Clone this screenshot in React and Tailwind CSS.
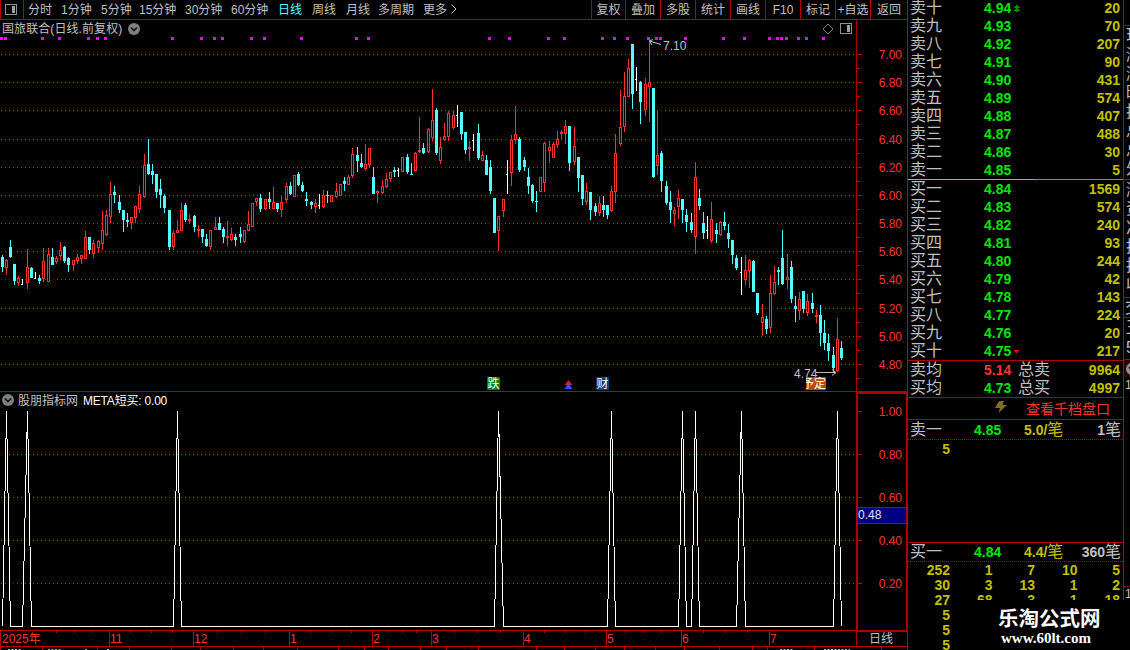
import { Fragment } from "react";

const PERIODS = [
  { label: "分时", width: "w-[33px]" },
  { label: "1分钟", width: "w-[40px]" },
  { label: "5分钟", width: "w-[38px]" },
  { label: "15分钟", width: "w-[46px]" },
  { label: "30分钟", width: "w-[46px]" },
  { label: "60分钟", width: "w-[47px]" },
  { label: "日线", width: "w-[34px]", active: true },
  { label: "周线", width: "w-[34px]" },
  { label: "月线", width: "w-[32px]" },
  { label: "多周期", width: "w-[45px]" },
  { label: "更多", width: "w-[27px]" },
];

const TOOLS = ["复权", "叠加", "多股", "统计", "画线", "F10", "标记", "+自选", "返回"];

// x, high, low, body top, body bottom, direction (u = up, d = down)
// flat days: x, high, low, open tick, 0, "w"
const CANDLES = [
  [2, 255, 272, 257, 267, "d"], [6, 259, 275, 260, 268, "u"], [10, 240, 258, 247, 257, "d"],
  [14, 264, 285, 264, 281, "d"], [18, 276, 286, 278, 283, "u"], [22, 279, 285, 284, 0, "w"],
  [27, 249, 289, 267, 283, "u"], [31, 267, 278, 268, 278, "d"], [35, 272, 279, 278, 0, "w"],
  [39, 275, 284, 278, 281, "d"], [43, 248, 282, 261, 279, "u"], [48, 248, 282, 254, 282, "u"],
  [52, 248, 265, 257, 265, "d"], [56, 256, 264, 258, 262, "u"], [60, 242, 260, 250, 256, "u"],
  [64, 246, 263, 247, 261, "d"], [68, 257, 272, 258, 265, "d"], [73, 260, 271, 260, 265, "u"],
  [77, 254, 264, 257, 261, "u"], [81, 255, 264, 255, 259, "u"], [85, 231, 259, 237, 259, "u"],
  [89, 237, 254, 237, 250, "d"], [93, 240, 258, 243, 254, "u"], [98, 240, 253, 241, 248, "u"],
  [102, 211, 250, 230, 244, "u"], [106, 210, 236, 215, 235, "u"], [110, 182, 223, 194, 217, "u"],
  [114, 186, 203, 192, 195, "d"], [119, 195, 213, 202, 210, "d"], [123, 210, 232, 210, 220, "d"],
  [127, 213, 227, 220, 222, "d"], [131, 217, 229, 217, 223, "u"], [135, 206, 223, 206, 218, "u"],
  [139, 186, 213, 194, 209, "u"], [144, 154, 198, 165, 197, "u"], [148, 139, 175, 164, 174, "d"],
  [152, 164, 184, 171, 175, "d"], [156, 174, 198, 174, 192, "d"], [160, 179, 208, 189, 195, "d"],
  [164, 194, 213, 196, 208, "d"], [169, 210, 250, 210, 247, "d"], [173, 230, 250, 233, 247, "u"],
  [177, 220, 233, 230, 233, "u"], [181, 203, 231, 210, 231, "u"], [185, 203, 222, 205, 220, "d"],
  [189, 214, 224, 219, 221, "u"], [194, 215, 232, 216, 227, "d"], [198, 225, 237, 229, 231, "u"],
  [202, 229, 243, 229, 237, "d"], [206, 234, 247, 239, 246, "d"], [210, 230, 250, 230, 247, "u"],
  [215, 217, 230, 227, 230, "u"], [219, 217, 230, 223, 230, "d"], [223, 227, 243, 229, 237, "d"],
  [227, 221, 246, 236, 238, "u"], [231, 228, 241, 234, 240, "u"], [235, 234, 246, 237, 240, "d"],
  [240, 227, 243, 234, 237, "d"], [244, 230, 243, 230, 242, "u"], [248, 211, 231, 224, 231, "u"],
  [252, 203, 227, 203, 227, "u"], [256, 198, 206, 198, 202, "u"], [260, 194, 212, 198, 209, "d"],
  [265, 199, 210, 199, 209, "u"], [269, 192, 209, 199, 202, "d"], [273, 187, 209, 202, 209, "u"],
  [277, 203, 212, 203, 209, "d"], [281, 196, 217, 202, 210, "u"], [286, 183, 203, 186, 200, "u"],
  [290, 182, 195, 186, 194, "d"], [294, 175, 197, 175, 197, "u"], [298, 172, 186, 174, 185, "d"],
  [302, 182, 192, 185, 191, "d"], [306, 192, 206, 199, 201, "d"], [311, 201, 209, 202, 205, "d"],
  [315, 199, 213, 203, 207, "u"], [319, 194, 209, 205, 0, "w"], [323, 190, 208, 195, 207, "u"],
  [327, 191, 203, 195, 196, "d"], [331, 195, 202, 195, 202, "u"], [336, 183, 198, 191, 197, "u"],
  [340, 184, 196, 184, 196, "u"], [344, 177, 191, 181, 184, "d"], [348, 175, 185, 177, 185, "u"],
  [352, 148, 178, 154, 176, "u"], [357, 147, 172, 155, 161, "d"], [361, 154, 168, 163, 167, "d"],
  [365, 144, 171, 164, 169, "u"], [369, 148, 168, 148, 165, "u"], [373, 167, 194, 177, 194, "d"],
  [377, 190, 203, 191, 193, "u"], [382, 180, 194, 186, 193, "u"], [386, 173, 188, 179, 187, "u"],
  [390, 172, 182, 172, 179, "u"], [394, 167, 177, 170, 172, "d"], [398, 168, 177, 170, 0, "w"],
  [402, 157, 172, 157, 172, "u"], [407, 154, 174, 157, 172, "d"], [411, 163, 175, 174, 175, "d"],
  [415, 152, 171, 153, 171, "u"], [419, 117, 153, 150, 152, "u"], [423, 143, 154, 148, 153, "d"],
  [428, 128, 153, 129, 152, "u"], [432, 89, 141, 120, 138, "u"], [436, 108, 155, 110, 153, "d"],
  [440, 137, 164, 147, 161, "u"], [444, 123, 141, 136, 140, "u"], [448, 111, 141, 113, 137, "u"],
  [453, 111, 129, 115, 128, "u"], [457, 105, 127, 115, 0, "w"], [461, 112, 140, 112, 134, "d"],
  [465, 132, 154, 132, 150, "d"], [469, 141, 161, 147, 149, "u"], [473, 134, 151, 140, 0, "w"],
  [478, 124, 160, 133, 158, "d"], [482, 151, 161, 155, 161, "u"], [486, 155, 175, 160, 175, "d"],
  [490, 160, 194, 167, 191, "d"], [494, 198, 233, 198, 233, "d"], [498, 216, 251, 216, 231, "u"],
  [503, 199, 217, 199, 211, "u"], [507, 160, 194, 174, 0, "w"], [511, 135, 186, 140, 173, "u"],
  [515, 106, 144, 134, 140, "u"], [519, 137, 172, 139, 170, "d"], [524, 157, 171, 160, 167, "d"],
  [528, 168, 194, 177, 186, "d"], [532, 184, 203, 185, 201, "d"], [536, 191, 212, 201, 202, "d"],
  [540, 177, 192, 177, 192, "u"], [544, 142, 192, 143, 183, "u"], [549, 141, 163, 147, 151, "u"],
  [553, 142, 158, 144, 158, "u"], [557, 131, 148, 139, 145, "u"], [561, 130, 140, 132, 134, "u"],
  [565, 120, 144, 126, 134, "u"], [569, 126, 171, 126, 163, "d"], [574, 127, 165, 146, 162, "u"],
  [578, 157, 192, 157, 178, "d"], [582, 175, 205, 175, 199, "d"], [586, 183, 205, 191, 202, "u"],
  [590, 192, 220, 192, 210, "d"], [595, 203, 216, 206, 212, "d"], [599, 196, 216, 203, 213, "u"],
  [603, 196, 217, 205, 210, "d"], [607, 205, 219, 205, 215, "d"], [611, 186, 212, 191, 211, "u"],
  [615, 134, 203, 153, 192, "u"], [620, 90, 146, 127, 144, "u"], [624, 72, 132, 96, 127, "u"],
  [628, 59, 97, 68, 97, "u"], [632, 44, 109, 44, 94, "d"], [636, 67, 91, 79, 0, "w"],
  [640, 81, 124, 82, 102, "d"], [645, 78, 116, 84, 110, "u"], [649, 40, 122, 82, 87, "u"],
  [653, 88, 178, 88, 177, "d"], [657, 111, 175, 155, 166, "u"], [661, 151, 192, 153, 181, "d"],
  [666, 181, 205, 186, 203, "d"], [670, 191, 223, 202, 210, "d"], [674, 207, 226, 210, 214, "u"],
  [678, 190, 219, 198, 207, "u"], [682, 199, 223, 199, 210, "d"], [686, 209, 232, 215, 222, "d"],
  [691, 213, 233, 222, 230, "d"], [695, 162, 254, 177, 237, "u"], [699, 189, 210, 198, 206, "d"],
  [703, 212, 239, 223, 233, "d"], [707, 216, 239, 230, 0, "w"], [711, 202, 243, 219, 241, "u"],
  [716, 223, 243, 230, 234, "d"], [720, 221, 236, 222, 235, "u"], [724, 212, 230, 222, 226, "d"],
  [728, 224, 248, 233, 239, "d"], [732, 240, 264, 240, 255, "d"], [736, 255, 270, 258, 268, "d"],
  [741, 257, 295, 272, 0, "w"], [745, 255, 285, 270, 280, "u"], [749, 259, 288, 260, 271, "u"],
  [753, 260, 292, 261, 292, "d"], [757, 293, 315, 293, 313, "d"], [762, 304, 336, 317, 323, "u"],
  [766, 316, 334, 319, 329, "d"], [770, 275, 333, 293, 328, "u"], [774, 266, 295, 282, 294, "u"],
  [778, 267, 285, 270, 272, "d"], [782, 230, 285, 258, 284, "d"], [787, 254, 289, 277, 280, "u"],
  [791, 261, 303, 267, 299, "d"], [795, 296, 322, 306, 309, "d"], [799, 292, 320, 299, 311, "u"],
  [803, 291, 313, 291, 309, "d"], [807, 294, 316, 301, 313, "u"], [812, 293, 313, 303, 309, "d"],
  [816, 310, 323, 315, 317, "u"], [820, 305, 346, 315, 333, "d"], [824, 320, 350, 333, 343, "d"],
  [828, 334, 361, 343, 351, "d"], [833, 347, 372, 355, 368, "d"], [837, 318, 372, 339, 371, "u"],
  [841, 341, 360, 348, 358, "d"],
];

const PRICE_LEVELS = [
  [54, "7.00"], [82, "6.80"], [110, "6.60"], [139, "6.40"], [167, "6.20"], [195, "6.00"],
  [223, "5.80"], [251, "5.60"], [279, "5.40"], [308, "5.20"], [336, "5.00"], [364, "4.80"],
];

const SIGNAL_LEVELS = [
  [411, "1.00"], [454, "0.80"], [497, "0.60"], [540, "0.40"], [583, "0.20"],
];

const EVENT_DOTS = [
  1, 5, 42, 59, 88, 97, 105, 172, 201, 214, 222, 251, 264, 301, 356, 368, 489, 509, 548, 564, 602,
  614, 627, 648, 656, 660, 685, 723, 744, 769, 777, 781, 786, 798, 806, 823,
];

// start, peak and end of every signal
const SPIKES = [
  [2, 6, 10], [22, 27, 31], [173, 177, 181], [494, 498, 503], [607, 611, 615],
  [678, 682, 686], [691, 695, 699], [736, 741, 745], [833, 837, 841],
];

const MONTHS = [
  [109, "11"], [193, "12"], [289, "1"], [372, "2"], [431, "3"], [523, "4"], [606, "5"], [681, "6"], [769, "7"],
];

const WEEK_TICKS = [
  56, 74, 91, 130, 151, 172, 217, 241, 265, 310, 331, 351, 387, 402, 416, 454, 477, 500, 544, 565,
  585, 625, 644, 661, 703, 725, 747,
];

const TAB_TICKS = [
  0, 42, 97, 129, 171, 200, 233, 263, 297, 338, 364, 388, 420, 446, 478, 536, 564, 595, 624, 655,
  684, 719, 752, 767, 814, 881,
];

const SELLS = [
  ["卖十", "4.94", "20"], ["卖九", "4.93", "70"], ["卖八", "4.92", "207"], ["卖七", "4.91", "90"],
  ["卖六", "4.90", "431"], ["卖五", "4.89", "574"], ["卖四", "4.88", "407"], ["卖三", "4.87", "488"],
  ["卖二", "4.86", "30"], ["卖一", "4.85", "5"],
];

const BUYS = [
  ["买一", "4.84", "1569"], ["买二", "4.83", "574"], ["买三", "4.82", "240"], ["买四", "4.81", "93"],
  ["买五", "4.80", "244"], ["买六", "4.79", "42"], ["买七", "4.78", "143"], ["买八", "4.77", "224"],
  ["买九", "4.76", "20"], ["买十", "4.75", "217"],
];

const BUY_QUEUE = [
  ["252", "1", "7", "10", "5"],
  ["30", "3", "13", "1", "2"],
  ["27", "68", "3", "1", "18"],
  ["5", "", "", "", ""],
  ["5", "", "", "", ""],
  ["5", "", "", "", ""],
];

function SplitIcon() {
  return (
    <svg width="13" height="12" viewBox="0 0 13 12" shapeRendering="crispEdges">
      <rect x="0.5" y="0.5" width="11" height="10" rx="1" fill="none" stroke="#909090" />
      <rect x="7" y="2" width="3" height="7" fill="#a0a0a0" />
    </svg>
  );
}

function CollapseIcon() {
  return (
    <svg width="12" height="12" viewBox="0 0 12 12">
      <circle cx="6" cy="6" r="6" fill="#808080" />
      <path d="M3 4.5 6 7.5 9 4.5" fill="none" stroke="#101010" strokeWidth="1.6" />
    </svg>
  );
}

function Toolbar() {
  return (
    <div className="flex h-5 justify-between border-b border-[#b00000] leading-[21px]">
      <div className="flex whitespace-nowrap">
        <div className="mr-1 flex w-6 items-center border-x border-[#b00000] pl-1">
          <SplitIcon />
        </div>
        {PERIODS.map((p) => (
          <span key={p.label} className={`${p.width} ${p.active ? "text-[#54ffff]" : ""}`}>
            {p.label}
          </span>
        ))}
        <svg width="8" height="18" viewBox="0 0 8 18">
          <path d="M1.5 4.5 6 9 1.5 13.5" fill="none" stroke="#c0c0c0" />
        </svg>
      </div>
      <div className="flex">
        {TOOLS.map((t, i) => (
          <span
            key={t}
            className={`flex justify-center whitespace-nowrap border-l border-[#b00000] ${
              i === 0 ? "w-[34px]" : i === TOOLS.length - 1 ? "w-[37px]" : "w-[35px]"
            }`}
          >
            {t}
          </span>
        ))}
      </div>
    </div>
  );
}

function Candle({ data }) {
  const [x, high, low, top, bottom, dir] = data;
  if (dir === "w") {
    return (
      <g fill="#ffffff">
        <rect x={x} y={high} width="1" height={low - high} />
        <rect x={x - 1} y={top} width="1" height="1" />
      </g>
    );
  }
  const h = bottom - top;
  return (
    <g fill={dir === "u" ? "#ff3232" : "#54ffff"}>
      <rect x={x} y={high} width="1" height={low - high} />
      <rect x={x - 1} y={top} width="3" height={h} />
      {dir === "u" && h > 2 && <rect x={x} y={top + 1} width="1" height={h - 2} fill="#000000" />}
    </g>
  );
}

function GridLine({ y }) {
  return <line x1="1" x2="856" y1={y + 0.5} y2={y + 0.5} stroke="#b00000" strokeDasharray="1 3" />;
}

function Flag({ x, width, color, text }) {
  return (
    <g>
      <rect x={x} y="377" width={width} height="13" rx="1" fill={color} />
      <text x={x + width / 2} y="388" fill="#ffffff" textAnchor="middle" fontSize="12">
        {text}
      </text>
    </g>
  );
}

function PriceChart() {
  return (
    <section className="h-[372px] border-b border-[#b00000]">
      <header className="flex h-[17px] items-center justify-between pl-[2px] pr-[54px] pt-px">
        <div className="flex items-center gap-[6px] leading-[18px]">
          <span className="tracking-[0.08px]">国旅联合(日线.前复权)</span>
          <CollapseIcon />
        </div>
        <div className="flex items-center gap-[6px]">
          <svg width="12" height="12" viewBox="0 0 12 12">
            <path d="M6 1 11 6 6 11 1 6Z" fill="none" stroke="#808080" />
          </svg>
          <SplitIcon />
        </div>
      </header>
      <svg width="907" height="354" viewBox="0 37 907 354" className="block overflow-visible" fontSize="12">
        <g shapeRendering="crispEdges">
          {PRICE_LEVELS.map(([y]) => (
            <Fragment key={y}>
              <GridLine y={y} />
              <rect x="857" y={y} width="5" height="1" fill="#b00000" />
              <rect x="857" y={y + 14} width="3" height="1" fill="#b00000" />
            </Fragment>
          ))}
          <rect x="856" y="20" width="1" height="371" fill="#b00000" />
          {CANDLES.map((c) => (
            <Candle key={c[0]} data={c} />
          ))}
          {EVENT_DOTS.map((x) => (
            <rect key={x} x={x - 1} y="37" width="3" height="3" fill="#ff00ff" />
          ))}
        </g>
        {PRICE_LEVELS.map(([y, label]) => (
          <text key={y} x="902" y={y + 5} textAnchor="end" fill="#ff3232">
            {label}
          </text>
        ))}
        <g fill="none" stroke="#c0c0c0">
          <path d="M661 44.5 649.5 41M653 39.5 649.5 41 652 45" />
          <path d="M816 372.5H836M832 369.5 836 372.5 832 375.5" />
        </g>
        <g fill="#c0c0c0">
          <text x="663" y="50">7.10</text>
          <text x="794" y="378">4.74</text>
        </g>
        <Flag x={487} width={13} color="#008000" text="跌" />
        <Flag x={596} width={13} color="#003f7f" text="财" />
        <g>
          <rect x="806" y="377" width="20" height="13" rx="1" fill="#c04800" />
          <text x="802" y="388" fill="#ffffff" clipPath="inset(0 0 0 4px)">予定</text>
        </g>
        <path d="M568.5 380 572.5 385H564.5Z" fill="#d02020" />
        <path d="M568.5 383 572.5 389H564.5Z" fill="#3050ff" />
      </svg>
    </section>
  );
}

function SignalChart() {
  const points = SPIKES.map(([a, b, c]) => `${a + 0.5},626.5 ${b + 0.5},411 ${c + 0.5},626.5`).join(" ");
  return (
    <section className="h-[238px]">
      <header className="flex h-4 items-center pl-[2px] leading-[18px]">
        <CollapseIcon />
        <span className="ml-1 pt-px">股朋指标网</span>
        <span className="ml-[5px] pt-px tracking-[-0.2px] text-white">META短买: 0.00</span>
      </header>
      <svg width="907" height="222" viewBox="0 408 907 222" className="block overflow-visible" fontSize="12">
        <g shapeRendering="crispEdges">
          {SIGNAL_LEVELS.map(([y]) => (
            <Fragment key={y}>
              {y > 411 && <GridLine y={y} />}
              <rect x="858" y={y} width="4" height="1" fill="#b00000" />
            </Fragment>
          ))}
          <polyline points={points} fill="none" stroke="#ffffff" />
          <rect x="857" y="393" width="50" height="238" fill="none" stroke="#b00000" strokeWidth="2" />
          <rect x="857.5" y="507.5" width="49" height="16" fill="#000080" stroke="#b00000" />
        </g>
        {SIGNAL_LEVELS.map(([y, label]) => (
          <text key={y} x="902" y={y + 5} textAnchor="end" fill="#ff3232">
            {label}
          </text>
        ))}
        <text x="858" y="519" fill="#e0e0e0">0.48</text>
      </svg>
    </section>
  );
}

function DateAxis() {
  return (
    <svg width="907" height="20" viewBox="0 630 907 20" className="block" fontSize="12">
      <g fill="#b00000" shapeRendering="crispEdges">
        <rect x="0" y="630" width="907" height="1" />
        <rect x="856" y="630" width="51" height="2" />
        <rect x="0" y="646" width="907" height="1" />
        <rect x="0" y="630" width="1" height="17" />
        <rect x="856" y="630" width="1" height="17" />
        {MONTHS.map(([x]) => (
          <rect key={x} x={x} y="630" width="1" height="17" />
        ))}
        {WEEK_TICKS.map((x) => (
          <rect key={x} x={x} y="631" width="1" height="2" />
        ))}
        {TAB_TICKS.map((x) => (
          <rect key={x} x={x} y="647" width="1" height="3" />
        ))}
      </g>
      <g fill="#ff3232">
        <text x="2" y="643">2025年</text>
        {MONTHS.map(([x, label]) => (
          <text key={x} x={x + 1} y="643">
            {label}
          </text>
        ))}
      </g>
      <text x="869" y="643" fill="#c0c0c0">日线</text>
      {/* tops of the tab captions below the window edge */}
      <g strokeDasharray="2 1.5" strokeWidth="1">
        <path d="M8 649.5H22M107 649.5H109M780 649.5H794M824 649.5H850" stroke="#c0c0c0" />
        <path d="M48 649.5H62M85 649.5H88" stroke="#c0c000" />
      </g>
    </svg>
  );
}

function QuoteRow({ label, price, volume, mark }) {
  return (
    <div className="flex h-[18px] items-center pl-[2px] pr-[3px]">
      <span className="w-[74px] text-base leading-[18px]">{label}</span>
      <span className="w-[30px] font-bold text-[#00e600]">{price}</span>
      {mark}
      <span className="ml-auto font-bold text-[#c0c000]">{volume}</span>
    </div>
  );
}

function AverageRow({ label, price, priceColor, totalLabel, total }) {
  return (
    <div className="flex h-[18px] items-center pl-[2px] pr-[3px]">
      <span className="w-[74px] text-base leading-[18px]">{label}</span>
      <span className={`w-[34px] font-bold ${priceColor}`}>{price}</span>
      <span className="text-base leading-[18px]">{totalLabel}</span>
      <span className="ml-auto font-bold text-[#c0c000]">{total}</span>
    </div>
  );
}

function QueueHead({ label, price, average, count, height }) {
  return (
    <div className={`flex ${height} items-center border-b border-dotted border-[#b00000] pl-[2px] pr-[2px]`}>
      <span className="w-[64px] text-base leading-[18px]">{label}</span>
      <span className="w-[50px] font-bold text-[#00e600]">{price}</span>
      <span className="flex items-center text-[#c0c000]">
        <b>{average}/</b>
        <span className="text-base leading-[18px]">笔</span>
      </span>
      <span className="ml-auto flex items-center">
        <b>{count}</b>
        <span className="text-base leading-[18px]">笔</span>
      </span>
    </div>
  );
}

function OrderBook() {
  return (
    <aside className="flex w-[217px] shrink-0 flex-col border-x border-[#b00000] text-sm leading-[18px]">
      <div className="-mt-px">
        {SELLS.map(([label, price, volume], i) => (
          <QuoteRow
            key={label}
            label={label}
            price={price}
            volume={volume}
            mark={
              i === 0 && (
                <svg width="6" height="7" viewBox="0 0 6 7" fill="#008c00" shapeRendering="crispEdges">
                  <path d="M2 0h2v1h1v1h1v1H4v1h1v1h1v1H4v1H2V6H0V5h1V4h1V3H0V2h1V1h1z" />
                </svg>
              )
            }
          />
        ))}
      </div>
      <div className="flex h-px shrink-0">
        <div className="w-[126px] bg-[#e0a040]" />
        <div className="flex-1 bg-[#5090e0]" />
      </div>
      <div>
        {BUYS.map(([label, price, volume], i) => (
          <QuoteRow
            key={label}
            label={label}
            price={price}
            volume={volume}
            mark={
              i === 9 && (
                <svg width="5" height="3" viewBox="0 0 5 3" fill="#ff0000" shapeRendering="crispEdges">
                  <path d="M0 0h5v1H4v1H3v1H2V2H1V1H0z" />
                </svg>
              )
            }
          />
        ))}
      </div>
      <div className="border-y border-[#b00000]">
        <AverageRow label="卖均" price="5.14" priceColor="text-[#ff3232]" totalLabel="总卖" total="9964" />
        <AverageRow label="买均" price="4.73" priceColor="text-[#00e600]" totalLabel="总买" total="4997" />
      </div>
      <div className="flex h-[22px] shrink-0 items-center justify-end gap-[19px] border-b border-[#b00000] pr-[13px] text-[#ff3232]">
        <svg width="12" height="12" viewBox="0 0 12 12" className="-mt-1">
          <path d="M4 0H9L7.5 4H12L3.5 12 5 7H0Z" fill="#7d6f2c" />
        </svg>
        <span>查看千档盘口</span>
      </div>
      <QueueHead label="卖一" price="4.85" average="5.0" count="1" height="h-5 shrink-0" />
      <div className="h-[102px] w-[42px] shrink-0 text-right font-bold text-[#c0c000]">5</div>
      <div className="shrink-0 border-t border-[#b00000]">
        <QueueHead label="买一" price="4.84" average="4.4" count="360" height="h-[19px]" />
      </div>
      <div className="grid shrink-0 grid-cols-[42px_repeat(4,42.5px)] auto-rows-[15px] text-right font-bold leading-[16px] text-[#c0c000]">
        {BUY_QUEUE.flat().map((n, i) => (
          <span key={i}>{n}</span>
        ))}
      </div>
    </aside>
  );
}

// Left edge of the next panel, cut off by the window
function InfoStrip() {
  return (
    <div className="flex w-[6px] shrink-0 flex-col overflow-hidden text-base">
      <div className="h-[26px] shrink-0 border-b border-[#b00000]" />
      <div className="h-[154px] shrink-0 border-b border-[#b00000] pl-[2px]">
        {["现", "涨", "涨", "昨", "换", "总", "总", "外"].map((c, i) => (
          <div key={i} className="h-[19px] w-4 leading-[19px]">{c}</div>
        ))}
      </div>
      <div className="h-[118px] shrink-0 border-b border-[#b00000] pl-[2px]">
        {["涨", "资", "净", "换", "换", "收"].map((c, i) => (
          <div key={i} className="h-[19px] w-4 leading-[19px]">{c}</div>
        ))}
      </div>
      <div className="h-5 w-5 shrink-0 border-b border-[#b00000] pl-px leading-[19px]">交</div>
      <div className="h-[42px] w-5 shrink-0 border-b border-[#b00000] pl-[2px] leading-5">
        <div>王</div>
        <div>5</div>
      </div>
      <div className="flex h-[17px] shrink-0 items-center bg-[#300000] pl-[2px]">
        <svg width="12" height="12" viewBox="0 0 12 12" className="shrink-0">
          <circle cx="6" cy="6" r="6" fill="#909090" />
          <path d="M3 4 6 7" stroke="#202020" strokeWidth="2" />
        </svg>
      </div>
      <div className="h-[210px] shrink-0 border-b border-dotted border-[#b00000] pl-px text-xs leading-[17px]">1</div>
      <div className="pl-px text-xs leading-[14px]">1</div>
    </div>
  );
}

function App() {
  return (
    <div className="relative flex h-[650px] w-[1130px] overflow-hidden bg-black font-['Liberation_Sans','Noto_Sans_CJK_SC',sans-serif] text-xs text-[#c0c0c0]">
      <main className="w-[907px] shrink-0">
        <Toolbar />
        <PriceChart />
        <SignalChart />
        <DateAxis />
      </main>
      <OrderBook />
      <InfoStrip />
      <div className="absolute left-[970px] top-[600px] flex h-[50px] w-[160px] flex-col bg-black pl-7 pt-2 text-white">
        <span className="text-[20.5px] font-bold leading-[22px]">乐淘公式网</span>
        <span className="pl-[3px] font-['Liberation_Serif',serif] text-[15px] font-bold leading-[17px]">
          www.60lt.com
        </span>
      </div>
    </div>
  );
}

export default App;
